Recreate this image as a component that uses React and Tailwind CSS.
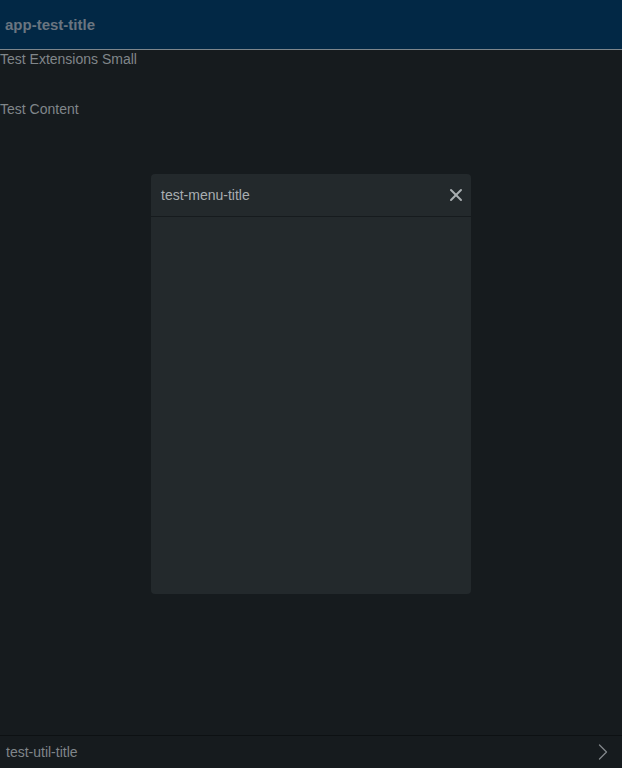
import { X, ChevronRight } from 'lucide-react';

export default function App() {
    return (
        <div className="relative h-[768px] w-full bg-[#161b1e] flex flex-col font-['Liberation_Sans',Arial,sans-serif] overflow-hidden">
            <header className="h-[50px] shrink-0 bg-[#022845] border-b border-[#7d868c] flex items-center px-[5px] pt-[2px]">
                <h1 className="text-[15px] font-bold text-[#6a7580]">app-test-title</h1>
            </header>

            <div className="flex-1 text-[14px] text-[#80868a]">
                <div className="h-[18px] leading-[18px]">Test Extensions Small</div>
                <div className="h-[18px] leading-[18px] mt-[32px]">Test Content</div>
            </div>

            <footer className="h-[33px] shrink-0 border-t border-[#0d1113] flex items-center justify-between pl-[6px] pr-[5px]">
                <span className="text-[14px] text-[#80868a]">test-util-title</span>
                <ChevronRight className="w-[28px] h-[28px] text-[#80868a]" strokeWidth={1.1} />
            </footer>

            {/* menu dialog */}
            <div className="absolute left-[151px] top-[174px] w-[320px] h-[420px] rounded-[4px] bg-[#23292c] flex flex-col">
                <div className="h-[43px] shrink-0 border-b border-[#161b1e] flex items-center justify-between pl-[10px] pr-[5px]">
                    <span className="text-[14px] text-[#a9aeb1]">test-menu-title</span>
                    <X className="w-[20px] h-[20px] text-[#a9aeb1]" strokeWidth={2.4} />
                </div>
                <div className="flex-1" />
            </div>
        </div>
    );
}
